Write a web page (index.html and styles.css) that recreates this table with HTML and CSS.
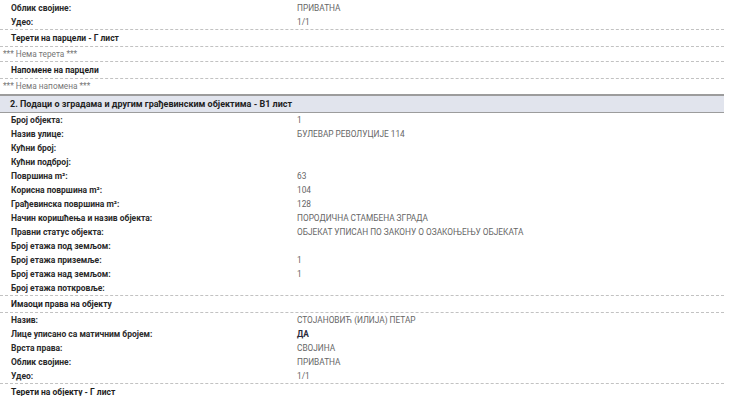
FILE: index.html
```html
<!DOCTYPE html>
<html lang="sr">
<head>
    <meta charset="UTF-8">
    <title>Лист непокретности</title>
    <link rel="stylesheet" href="styles.css">
</head>
<body>
    <div class="sheet">
        <div class="group">
            <div class="row"><span class="label">Облик својине:</span><span class="value">ПРИВАТНА</span></div>
            <div class="row"><span class="label">Удео:</span><span class="value">1/1</span></div>
        </div>
        <div class="subhead">Терети на парцели - Г лист</div>
        <div class="note">*** Нема терета ***</div>
        <div class="subhead">Напомене на парцели</div>
        <div class="note last">*** Нема напомена ***</div>

        <div class="section-title">2. Подаци о зградама и другим грађевинским објектима - В1 лист</div>
        <div class="group">
            <div class="row"><span class="label">Број објекта:</span><span class="value">1</span></div>
            <div class="row"><span class="label">Назив улице:</span><span class="value">БУЛЕВАР РЕВОЛУЦИЈЕ 114</span></div>
            <div class="row"><span class="label">Кућни број:</span><span class="value"></span></div>
            <div class="row"><span class="label">Кућни подброј:</span><span class="value"></span></div>
            <div class="row"><span class="label">Површина m²:</span><span class="value">63</span></div>
            <div class="row"><span class="label">Корисна површина m²:</span><span class="value">104</span></div>
            <div class="row"><span class="label">Грађевинска површина m²:</span><span class="value">128</span></div>
            <div class="row"><span class="label">Начин коришћења и назив објекта:</span><span class="value">ПОРОДИЧНА СТАМБЕНА ЗГРАДА</span></div>
            <div class="row"><span class="label">Правни статус објекта:</span><span class="value">ОБЈЕКАТ УПИСАН ПО ЗАКОНУ О ОЗАКОЊЕЊУ ОБЈЕКАТА</span></div>
            <div class="row"><span class="label">Број етажа под земљом:</span><span class="value"></span></div>
            <div class="row"><span class="label">Број етажа приземље:</span><span class="value">1</span></div>
            <div class="row"><span class="label">Број етажа над земљом:</span><span class="value">1</span></div>
            <div class="row"><span class="label">Број етажа поткровље:</span><span class="value"></span></div>
        </div>
        <div class="subhead">Имаоци права на објекту</div>
        <div class="group">
            <div class="row"><span class="label">Назив:</span><span class="value">СТОЈАНОВИЋ (ИЛИЈА) ПЕТАР</span></div>
            <div class="row"><span class="label">Лице уписано са матичним бројем:</span><span class="value strong">ДА</span></div>
            <div class="row"><span class="label">Врста права:</span><span class="value">СВОЈИНА</span></div>
            <div class="row"><span class="label">Облик својине:</span><span class="value">ПРИВАТНА</span></div>
            <div class="row"><span class="label">Удео:</span><span class="value">1/1</span></div>
        </div>
        <div class="subhead">Терети на објекту - Г лист</div>
    </div>
</body>
</html>
```

FILE: styles.css
```css
body {
    margin: 0;
    background-color: #fff;
    font-family: Roboto, "Noto Sans", Arial, sans-serif;
    color: #222;
    overflow: hidden;
}
.sheet {
    width: 724px;
    padding-top: 1px;
}
.group {
    border-bottom: 1px dashed #c2c2c2;
}
.row {
    display: flex;
    height: 14px;
    line-height: 14px;
    font-size: 8.5px;
}
.label {
    width: 286px;
    padding-left: 11px;
    font-weight: bold;
    color: #2a2a2a;
}
.value {
    font-size: 8.3px;
    color: #666;
}
.value.strong {
    font-weight: bold;
    color: #2b2b3a;
}
.subhead {
    height: 16px;
    line-height: 16px;
    padding-left: 11px;
    font-size: 8.5px;
    font-weight: bold;
    color: #1e1e1e;
    border-bottom: 1px dashed #c2c2c2;
}
.note {
    height: 14px;
    line-height: 14px;
    padding-left: 3px;
    font-size: 8.3px;
    color: #777;
    border-bottom: 1px dashed #c2c2c2;
}
.note.last {
    border-bottom: none;
}
.section-title {
    height: 16px;
    line-height: 16px;
    margin-top: 1px;
    padding-left: 10px;
    font-size: 9px;
    font-weight: bold;
    color: #1e1e1e;
    background-color: #e1e4ed;
    border-top: 2px solid #9c9c9c;
    border-bottom: 1px solid #9c9c9c;
}
```
